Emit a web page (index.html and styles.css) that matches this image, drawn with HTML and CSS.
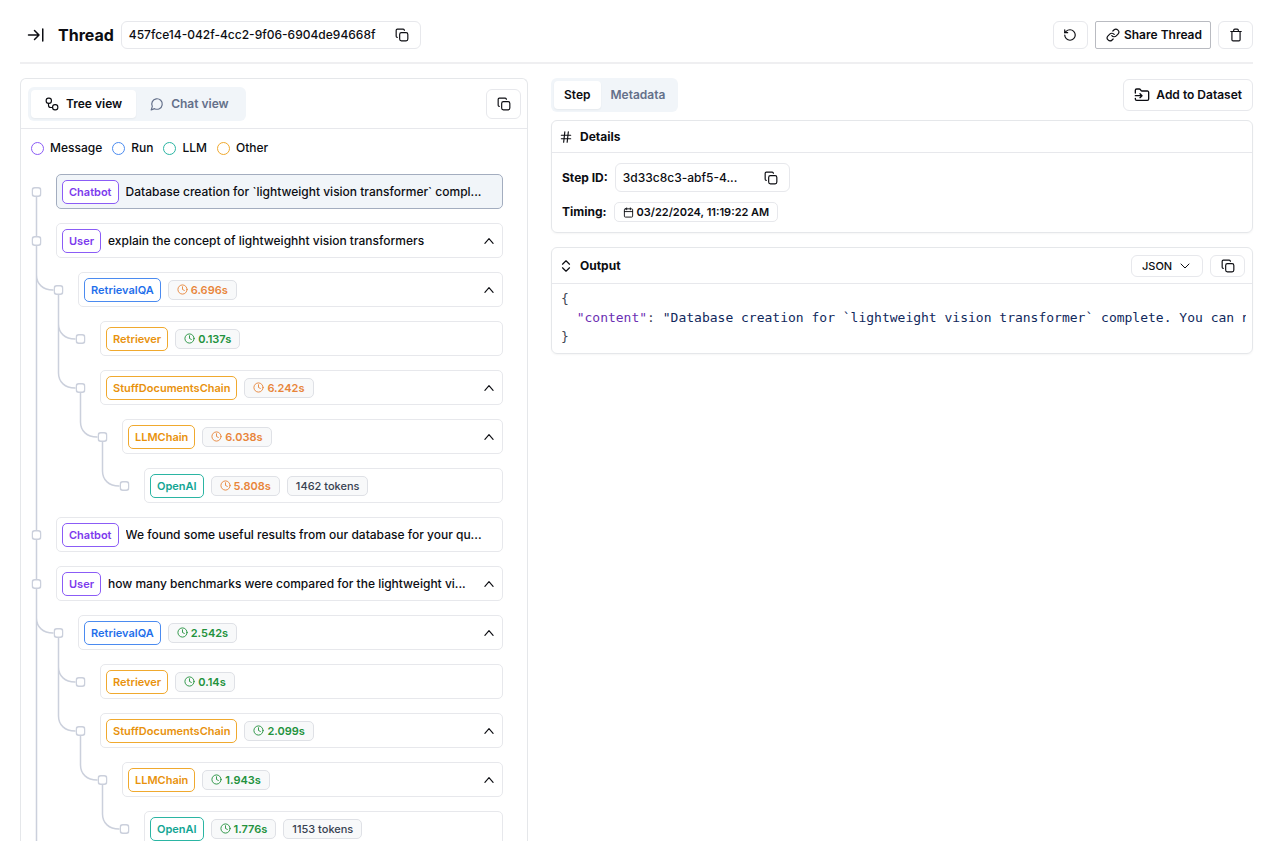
FILE: index.html
```html
<!DOCTYPE html>
<html lang="en">
<head>
<meta charset="utf-8">
<title>Thread</title>
<link rel="stylesheet" href="styles.css">
</head>
<body>
<svg class="defs" aria-hidden="true">
  <symbol id="copy" viewBox="0 0 24 24"><rect x="8" y="8" width="14" height="14" rx="3"/><path d="M4 16c-1.1 0-2-.9-2-2V4c0-1.100.9-2 2-2h10c1.100 0 2 .9 2 2"/></symbol>
  <symbol id="to-line" viewBox="0 0 24 24"><path d="M16 12H2M10 18l6-6-6-6M21 4v16"/></symbol>
  <symbol id="rotate" viewBox="0 0 24 24"><path d="M3 12a9 9 0 1 0 9-9 9.750 9.750 0 0 0-6.740 2.740L3 8"/><path d="M3 3v5h5"/></symbol>
  <symbol id="link" viewBox="0 0 24 24"><path d="M10 13a5 5 0 0 0 7.540.540l3-3a5 5 0 0 0-7.070-7.070l-1.720 1.710"/><path d="M14 11a5 5 0 0 0-7.540-.540l-3 3a5 5 0 0 0 7.070 7.070l1.710-1.710"/></symbol>
  <symbol id="trash" viewBox="0 0 24 24"><path d="M3 6h18M19 6v14c0 1-1 2-2 2H7c-1 0-2-1-2-2V6M8 6V4c0-1 1-2 2-2h4c1 0 2 1 2 2v2"/></symbol>
  <symbol id="flow" viewBox="0 0 24 24"><rect x="2" y="2" width="9" height="9" rx="4"/><path d="M6 11v3a4 4 0 0 0 4 4h3"/><rect x="13" y="13" width="9" height="9" rx="4"/></symbol>
  <symbol id="chat" viewBox="0 0 24 24"><path d="M7.900 20A9 9 0 1 0 4 16.100L2 22Z"/></symbol>
  <symbol id="folder" viewBox="0 0 24 24"><path d="M2 9V5a2 2 0 0 1 2-2h3.900a2 2 0 0 1 1.690.9l.81 1.200a2 2 0 0 0 1.670.9H20a2 2 0 0 1 2 2v10a2 2 0 0 1-2 2H4a2 2 0 0 1-2-2v-1"/><path d="M2 13h10M9 16l3-3-3-3"/></symbol>
  <symbol id="hash" viewBox="0 0 24 24"><path d="M4 9h16M4 15h16M10 3 8 21M16 3l-2 18"/></symbol>
  <symbol id="updown" viewBox="0 0 24 24"><path d="m6 9 6-6 6 6M6 15l6 6 6-6"/></symbol>
  <symbol id="up" viewBox="0 0 24 24"><path d="m5 16 7-8 7 8"/></symbol>
  <symbol id="down" viewBox="0 0 24 24"><path d="m4 8 8 8 8-8"/></symbol>
  <symbol id="calendar" viewBox="0 0 24 24"><rect x="3" y="4" width="18" height="18" rx="2"/><path d="M8 2v4M16 2v4M3 10h18"/></symbol>
  <symbol id="clock" viewBox="0 0 24 24"><circle cx="12" cy="12" r="10"/><path d="M12 6v6l4 2"/></symbol>
  <symbol id="node" viewBox="0 0 10 10"><rect x="0.750" y="0.750" width="8.500" height="8.500" rx="2.500" fill="#fff"/></symbol>
</svg>

<div class="app">
  <header class="topbar">
    <button class="plain" aria-label="Collapse"><svg class="i18"><use href="#to-line"/></svg></button>
    <h1>Thread</h1>
    <div class="idbox"><span>457fce14-042f-4cc2-9f06-6904de94668f</span><button class="plain" aria-label="Copy thread ID"><svg class="i14"><use href="#copy"/></svg></button></div>
    <div class="actions">
      <button class="btn square" aria-label="Refresh"><svg class="i14"><use href="#rotate"/></svg></button>
      <button class="btn share"><svg class="i14"><use href="#link"/></svg>Share Thread</button>
      <button class="btn square" aria-label="Delete"><svg class="i14"><use href="#trash"/></svg></button>
    </div>
  </header>

  <main class="columns">
    <section class="panel tree-panel">
      <div class="panel-head">
        <div class="tabs">
          <button class="tab active wide"><svg class="i14"><use href="#flow"/></svg>Tree view</button>
          <button class="tab wide"><svg class="i14"><use href="#chat"/></svg>Chat view</button>
        </div>
        <button class="btn square" aria-label="Copy"><svg class="i14"><use href="#copy"/></svg></button>
      </div>
      <ul class="legend">
        <li class="violet">Message</li><li class="blue">Run</li><li class="teal">LLM</li><li class="amber">Other</li>
      </ul>
      <ul class="tree">
        <li class="row"><svg class="wire d0"><path d="M5.500 30V49"/><use href="#node" x="0.500" y="20" width="10" height="10"/></svg>
          <div class="card selected"><span class="tag violet">Chatbot</span><span class="text">Database creation for `lightweight vision transformer` compl...</span></div></li>
        <li class="row"><svg class="wire d0"><path d="M5.500 0V49"/><use href="#node" x="0.500" y="20" width="10" height="10"/></svg>
          <div class="card"><span class="tag violet">User</span><span class="text">explain the concept of lightweighht vision transformers</span><button class="plain" aria-label="Collapse step"><svg class="i14"><use href="#up"/></svg></button></div></li>
        <li class="row"><svg class="wire d1"><path d="M5.500 0V49M5.500 10C5.500 19 12 25 22 25M27.500 30V49"/><use href="#node" x="22.500" y="20" width="10" height="10"/></svg>
          <div class="card"><span class="tag blue">RetrievalQA</span><span class="chip slow"><svg class="i11"><use href="#clock"/></svg>6.696s</span><button class="plain" aria-label="Collapse step"><svg class="i14"><use href="#up"/></svg></button></div></li>
        <li class="row"><svg class="wire d2"><path d="M5.500 0V49M27.500 0V49M27.500 10C27.500 19 34 25 44 25"/><use href="#node" x="44.500" y="20" width="10" height="10"/></svg>
          <div class="card"><span class="tag amber">Retriever</span><span class="chip fast"><svg class="i11"><use href="#clock"/></svg>0.137s</span></div></li>
        <li class="row"><svg class="wire d2"><path d="M5.500 0V49M27.500 0V10C27.500 19 34 25 44 25M49.500 30V49"/><use href="#node" x="44.500" y="20" width="10" height="10"/></svg>
          <div class="card"><span class="tag amber">StuffDocumentsChain</span><span class="chip slow"><svg class="i11"><use href="#clock"/></svg>6.242s</span><button class="plain" aria-label="Collapse step"><svg class="i14"><use href="#up"/></svg></button></div></li>
        <li class="row"><svg class="wire d3"><path d="M5.500 0V49M49.500 0V10C49.500 19 56 25 66 25M71.500 30V49"/><use href="#node" x="66.500" y="20" width="10" height="10"/></svg>
          <div class="card"><span class="tag amber">LLMChain</span><span class="chip slow"><svg class="i11"><use href="#clock"/></svg>6.038s</span><button class="plain" aria-label="Collapse step"><svg class="i14"><use href="#up"/></svg></button></div></li>
        <li class="row"><svg class="wire d4"><path d="M5.500 0V49M71.500 0V10C71.500 19 78 25 88 25"/><use href="#node" x="88.500" y="20" width="10" height="10"/></svg>
          <div class="card"><span class="tag teal">OpenAI</span><span class="chip slow"><svg class="i11"><use href="#clock"/></svg>5.808s</span><span class="chip">1462 tokens</span></div></li>
        <li class="row"><svg class="wire d0"><path d="M5.500 0V49"/><use href="#node" x="0.500" y="20" width="10" height="10"/></svg>
          <div class="card"><span class="tag violet">Chatbot</span><span class="text">We found some useful results from our database for your qu...</span></div></li>
        <li class="row"><svg class="wire d0"><path d="M5.500 0V49"/><use href="#node" x="0.500" y="20" width="10" height="10"/></svg>
          <div class="card"><span class="tag violet">User</span><span class="text">how many benchmarks were compared for the lightweight vi...</span><button class="plain" aria-label="Collapse step"><svg class="i14"><use href="#up"/></svg></button></div></li>
        <li class="row"><svg class="wire d1"><path d="M5.500 0V49M5.500 10C5.500 19 12 25 22 25M27.500 30V49"/><use href="#node" x="22.500" y="20" width="10" height="10"/></svg>
          <div class="card"><span class="tag blue">RetrievalQA</span><span class="chip fast"><svg class="i11"><use href="#clock"/></svg>2.542s</span><button class="plain" aria-label="Collapse step"><svg class="i14"><use href="#up"/></svg></button></div></li>
        <li class="row"><svg class="wire d2"><path d="M5.500 0V49M27.500 0V49M27.500 10C27.500 19 34 25 44 25"/><use href="#node" x="44.500" y="20" width="10" height="10"/></svg>
          <div class="card"><span class="tag amber">Retriever</span><span class="chip fast"><svg class="i11"><use href="#clock"/></svg>0.14s</span></div></li>
        <li class="row"><svg class="wire d2"><path d="M5.500 0V49M27.500 0V10C27.500 19 34 25 44 25M49.500 30V49"/><use href="#node" x="44.500" y="20" width="10" height="10"/></svg>
          <div class="card"><span class="tag amber">StuffDocumentsChain</span><span class="chip fast"><svg class="i11"><use href="#clock"/></svg>2.099s</span><button class="plain" aria-label="Collapse step"><svg class="i14"><use href="#up"/></svg></button></div></li>
        <li class="row"><svg class="wire d3"><path d="M5.500 0V49M49.500 0V10C49.500 19 56 25 66 25M71.500 30V49"/><use href="#node" x="66.500" y="20" width="10" height="10"/></svg>
          <div class="card"><span class="tag amber">LLMChain</span><span class="chip fast"><svg class="i11"><use href="#clock"/></svg>1.943s</span><button class="plain" aria-label="Collapse step"><svg class="i14"><use href="#up"/></svg></button></div></li>
        <li class="row"><svg class="wire d4"><path d="M5.500 0V49M71.500 0V10C71.500 19 78 25 88 25"/><use href="#node" x="88.500" y="20" width="10" height="10"/></svg>
          <div class="card"><span class="tag teal">OpenAI</span><span class="chip fast"><svg class="i11"><use href="#clock"/></svg>1.776s</span><span class="chip">1153 tokens</span></div></li>
      </ul>
    </section>

    <section class="detail">
      <div class="detail-bar">
        <div class="tabs"><button class="tab active">Step</button><button class="tab">Metadata</button></div>
        <button class="btn dataset"><svg class="i16"><use href="#folder"/></svg>Add to Dataset</button>
      </div>
      <div class="panel">
        <div class="sub-head"><svg class="i14"><use href="#hash"/></svg><h2>Details</h2></div>
        <dl class="facts">
          <div><dt>Step ID:</dt><dd class="idbox"><span>3d33c8c3-abf5-4...</span><button class="plain" aria-label="Copy step ID"><svg class="i14"><use href="#copy"/></svg></button></dd></div>
          <div><dt>Timing:</dt><dd class="when"><svg class="i11"><use href="#calendar"/></svg>03/22/2024, 11:19:22 AM</dd></div>
        </dl>
      </div>
      <div class="panel output">
        <div class="sub-head tall"><svg class="i14"><use href="#updown"/></svg><h2>Output</h2>
          <div class="format"><select aria-label="Format"><option>JSON</option></select><svg class="i12"><use href="#down"/></svg></div>
          <button class="btn small" aria-label="Copy output"><svg class="i14"><use href="#copy"/></svg></button>
        </div>
        <pre><code>{
  <span class="key">"content"</span>: <span class="str">"Database creation for `lightweight vision transformer` complete. You can n</span>
}</code></pre>
      </div>
    </section>
  </main>
</div>
</body>
</html>
```
FILE: styles.css
```css
* { box-sizing: border-box; }
body {
  margin: 0;
  background: #fff;
  color: #0c0d12;
  font: 500 12px/20px Inter, "Liberation Sans", sans-serif;
}
button, select { font: inherit; color: inherit; }
ul, dl, dd, h1, h2, pre { margin: 0; padding: 0; }
ul { list-style: none; }
svg { fill: none; stroke: currentColor; stroke-width: 2; stroke-linecap: round; stroke-linejoin: round; flex: none; }
.defs { position: absolute; width: 0; height: 0; }
.i11 { width: 11px; height: 11px; }
.i12 { width: 12px; height: 12px; }
.i14 { width: 14px; height: 14px; }
.i16 { width: 16px; height: 16px; }
.i18 { width: 18px; height: 18px; }

.app { height: 100vh; padding: 7px 14px 12px 20px; display: flex; flex-direction: column; }
.topbar { height: 57px; flex: none; display: flex; align-items: center; padding-left: 7px; border-bottom: 2px solid #efeff1; }
h1 { font-size: 16px; font-weight: 700; margin: 0 7px 0 13px; }
h2 { font-size: 12px; font-weight: 700; }
.plain { border: 0; padding: 0; background: none; display: flex; align-items: center; }
.idbox { height: 28px; display: flex; align-items: center; justify-content: space-between; gap: 20px; padding: 0 11px 0 7px; border: 1px solid #e7e8ec; border-radius: 6px; white-space: nowrap; }
.actions { margin-left: auto; display: flex; gap: 7px; }
.btn { height: 28px; display: flex; align-items: center; justify-content: center; gap: 4px; padding: 0 7px; background: #fff; border: 1px solid #e7e8ec; border-radius: 6px; font-weight: 600; }
.square { width: 35px; padding: 0; }
.share { padding: 0 8px 0 10px; border-color: #b9bbc1; border-radius: 2px; }

.columns { flex: 1; min-height: 0; margin-top: 14px; display: grid; grid-template-columns: minmax(0, 508fr) minmax(0, 702fr); gap: 23px; }
.panel { border: 1px solid #e5e7ea; border-radius: 6px; box-shadow: 0 1px 2px #0000000a; }
.tree-panel { display: flex; flex-direction: column; min-height: 0; overflow: hidden; border-bottom: 0; border-radius: 6px 6px 0 0; box-shadow: none; }
.panel-head { display: flex; align-items: center; justify-content: space-between; height: 50px; flex: none; padding: 0 6px 0 7px; border-bottom: 1px solid #e7e8ec; }
.panel-head .btn { height: 30px; }
.tabs { display: flex; height: 34px; padding: 3px; border-radius: 6px; background: #f1f5f9; }
.tab { display: flex; align-items: center; gap: 7px; padding: 0 10px; border: 0; border-radius: 4px; background: none; color: #64708a; font-weight: 600; }
.tab.wide { padding: 0 14px; }
.tab.active { background: #fff; color: #0c0d12; box-shadow: 0 1px 2px #0000000d; }
.legend { display: flex; gap: 10px; padding: 9px 10px; flex: none; }
.legend li { display: flex; align-items: center; gap: 6px; }
.legend li::before { content: ""; width: 11px; height: 11px; border: 1px solid var(--tone); border-radius: 50%; }
.violet { --tone: #8b5cf6; --ink: #7c3aed; }
.blue { --tone: #4b8bf0; --ink: #1f6feb; }
.teal { --tone: #2bb5a3; --ink: #12a594; }
.amber { --tone: #f0a92e; --ink: #e8920c; }

.tree { padding: 0 24px 0 10px; }
.row { display: flex; height: 49px; align-items: center; }
.wire { height: 49px; stroke: #cbd0dc; stroke-width: 1.5px; }
.d0 { width: 25px; }
.d1 { width: 47px; }
.d2 { width: 69px; }
.d3 { width: 91px; }
.d4 { width: 113px; }
.card { flex: 1; min-width: 0; height: 35px; display: flex; align-items: center; gap: 7px; padding: 0 6px 0 5px; border: 1px solid #e7e8ec; border-radius: 5px; }
.card .plain { margin-left: auto; }
.selected { background: #f1f5f9; border-color: #a3adbf; }
.text { flex: 1; min-width: 0; overflow: hidden; text-overflow: ellipsis; white-space: nowrap; }
.tag { height: 24px; padding: 0 6px; border: 1px solid var(--tone); border-radius: 5px; background: #fff; color: var(--ink); font-size: 11px; font-weight: 600; line-height: 22px; }
.chip { display: flex; align-items: center; gap: 3px; height: 20px; padding: 0 8px; border: 1px solid #dfe1e6; border-radius: 5px; background: #f8f9fa; color: #374151; font-size: 11px; font-weight: 500; }
.slow { color: #e8853a; font-weight: 600; }
.fast { color: #23923d; font-weight: 600; }

.detail-bar { display: flex; justify-content: space-between; align-items: center; margin-bottom: 8px; }
.dataset { height: 32px; padding: 0 10px; gap: 6px; }
.sub-head { display: flex; align-items: center; gap: 7px; height: 32px; padding: 0 7px; border-bottom: 1px solid #e7e8ec; }
.facts { padding: 10px; }
.facts div { display: flex; align-items: center; gap: 7px; }
.facts div + div { margin-top: 10px; }
dt { font-weight: 700; }
.facts .idbox { width: 175px; height: 29px; }
.when { display: flex; align-items: center; gap: 3px; height: 20px; padding: 0 8px; border: 1px solid #e7e8ec; border-radius: 5px; font-size: 11px; font-weight: 600; }
.output { margin-top: 14px; }
.tall { height: 36px; }
.format { position: relative; margin-left: auto; }
.format select { appearance: none; width: 72px; height: 22px; padding: 0 10px; border: 1px solid #e7e8ec; border-radius: 6px; background: #fff; font-size: 11px; }
.format svg { position: absolute; right: 12px; top: 5px; }
.small { width: 35px; height: 22px; padding: 0; }
pre { margin: 5px 6px 7px 9px; overflow: hidden; color: #3f4654; font: 13px/19px "DejaVu Sans Mono", monospace; }
code { font: inherit; }
.key { color: #6b2fb3; }
.str { color: #10285c; }
```
